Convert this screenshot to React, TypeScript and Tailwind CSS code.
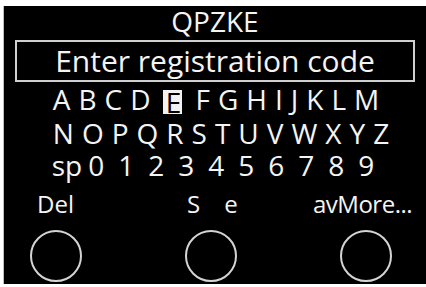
import React from 'react';

const row1 = ['A', 'B', 'C', 'D', 'E', 'F', 'G', 'H', 'I', 'J', 'K', 'L', 'M'];
const row2 = ['N', 'O', 'P', 'Q', 'R', 'S', 'T', 'U', 'V', 'W', 'X', 'Y', 'Z'];
const digits = ['0', '1', '2', '3', '4', '5', '6', '7', '8', '9'];

const Knob: React.FC = () => (
    <div className="w-[52px] h-[52px] rounded-full border-[2.5px] border-[#d4d4d4]" />
);

export default function App() {
    return (
        <div className="w-[426px] h-[287px] bg-white pt-[6px] pl-[3px] overflow-hidden">
            <div
                className="w-[423px] h-[278px] bg-black text-[#f4f4f4] border-l border-[#bdbdbd] flex flex-col"
                style={{ fontFamily: '"Open Sans", "Noto Sans", sans-serif' }}
            >
                <div className="mt-[1px] h-[28px] text-[28px] leading-none text-center">QPZKE</div>

                <div className="mt-[5px] mx-[11px] h-[42px] border-2 border-[#d0d0d0] flex items-center justify-center">
                    <span className="text-[30px] leading-none">Enter registration code</span>
                </div>

                <div className="mt-[3px] h-[28px] flex justify-center gap-[8px] text-[28px] leading-none pl-[2px]">
                    {row1.map((c) =>
                        c === 'E' ? (
                            <span
                                key={c}
                                className="w-[19px] h-[24px] mt-[5px] mx-[5px] bg-[#f2f2f2] text-black flex items-center justify-center pl-[1px]"
                            >
                                {c}
                            </span>
                        ) : (
                            <span key={c}>{c}</span>
                        )
                    )}
                </div>

                <div className="mt-[6px] h-[28px] flex justify-center gap-[8px] text-[28px] leading-none pl-[12px]">
                    {row2.map((c) => (
                        <span key={c}>{c}</span>
                    ))}
                </div>

                <div className="mt-[4px] h-[28px] flex justify-center text-[28px] leading-none pr-[4px]">
                    <span className="mr-[6px]">sp</span>
                    <div className="flex gap-[14px]">
                        {digits.map((d) => (
                            <span key={d}>{d}</span>
                        ))}
                    </div>
                </div>

                <div className="mt-[13px] h-[24px] flex text-[24px] leading-none">
                    <span className="ml-[33px] w-[150px]">Del</span>
                    <span className="w-[126px] flex gap-[24px]">
                        <span>S</span>
                        <span>e</span>
                    </span>
                    <span className="tracking-[-0.5px]">avMore...</span>
                </div>

                <div className="mt-[14px] flex gap-[103px] pl-[26px]">
                    <Knob />
                    <Knob />
                    <Knob />
                </div>
            </div>
        </div>
    );
}
